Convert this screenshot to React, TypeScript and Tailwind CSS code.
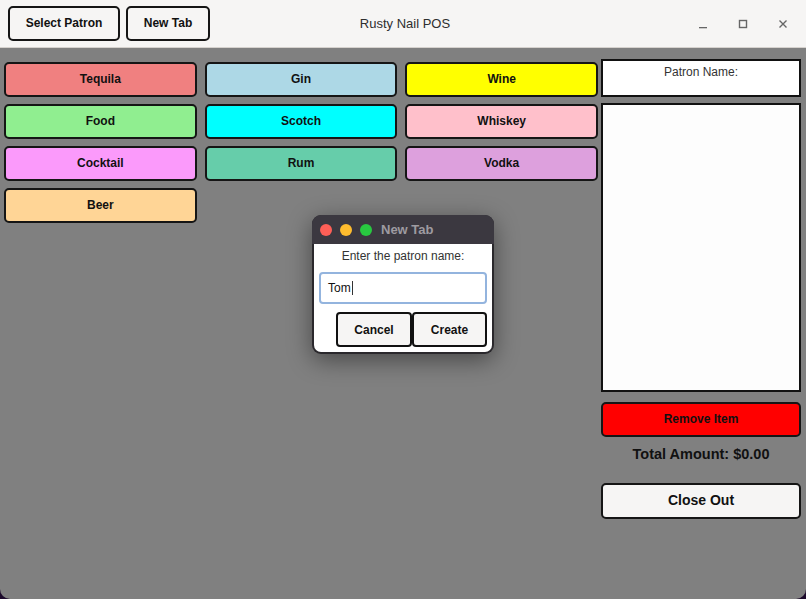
import React from "react"

const items = [
  { name: "Tequila", bg: "bg-[#f08080]" },
  { name: "Gin", bg: "bg-[#add8e6]" },
  { name: "Wine", bg: "bg-[#ffff00]" },
  { name: "Food", bg: "bg-[#90ee90]" },
  { name: "Scotch", bg: "bg-[#00ffff]" },
  { name: "Whiskey", bg: "bg-[#ffc0cb]" },
  { name: "Cocktail", bg: "bg-[#fb9afb]" },
  { name: "Rum", bg: "bg-[#66cdaa]" },
  { name: "Vodka", bg: "bg-[#dda0dd]" },
  { name: "Beer", bg: "bg-[#ffd596]" },
]

function TopButton({ label, w }: { label: string; w: string }) {
  return (
    <button className={`${w} h-[35px] rounded-[5px] border-2 border-[#151515] bg-[#f6f5f4] text-[12px] font-bold text-[#111] pb-[2px]`}>
      {label}
    </button>
  )
}

function NewTabDialog() {
  return (
    <div className="absolute left-[312px] top-[215px] w-[182px] h-[139px] rounded-[9px] bg-[#2a282c] shadow-[0_6px_24px_rgba(0,0,0,0.45)] flex flex-col overflow-hidden">
      {/* title bar */}
      <div className="h-[29px] bg-[#3b3840] flex items-center pl-[8px] gap-[8px] shrink-0">
        <span className="w-[12px] h-[12px] rounded-full bg-[#fe5f57]" />
        <span className="w-[12px] h-[12px] rounded-full bg-[#febc2e]" />
        <span className="w-[12px] h-[12px] rounded-full bg-[#28c840]" />
        <span className="ml-[1px] text-[13px] font-bold text-[#9e9ba1]">New Tab</span>
      </div>
      <div className="flex-1 mx-[2px] mb-[2px] rounded-b-[7px] bg-white flex flex-col px-[5px]">
        <div className="text-center text-[12px] text-[#333] mt-[4px] leading-[16px]">Enter the patron name:</div>
        <div className="mt-[8px] h-[32px] rounded-[4px] border-2 border-[#93b4de] flex items-center pl-[7px] text-[12px] text-[#111]">
          Tom<span className="w-px h-[14px] bg-[#333] ml-[1px]" />
        </div>
        <div className="mt-[8px] flex justify-end">
          <button className="w-[76px] h-[35px] rounded-[4px] border-2 border-[#111] bg-[#f6f5f4] text-[12px] font-bold text-[#111]">Cancel</button>
          <button className="w-[75px] h-[35px] rounded-[4px] border-2 border-[#111] bg-[#f6f5f4] text-[12px] font-bold text-[#111]">Create</button>
        </div>
      </div>
    </div>
  )
}

export default function App() {
  return (
    <div className="w-[806px] h-[599px] bg-[#1d0a2c] font-['Liberation_Sans',Arial,sans-serif] overflow-hidden">
      <div className="relative w-full h-full rounded-b-[10px] overflow-hidden bg-[#808080] flex flex-col">
        {/* header bar */}
        <div className="relative h-[48px] shrink-0 bg-[#f6f5f4] border-b border-[#d6d2ce] flex items-center gap-[6px] pl-[8px]">
          <TopButton label="Select Patron" w="w-[112px]" />
          <TopButton label="New Tab" w="w-[84px]" />
          <div className="absolute left-[4px] right-0 top-[14px] text-center text-[13px] text-[#2e2e2e] pointer-events-none">Rusty Nail POS</div>
          <div className="ml-auto mr-[17px] flex items-center gap-[28px]">
            <svg width="12" height="12" viewBox="0 0 12 12"><rect x="2" y="9" width="8" height="1.3" fill="#666" /></svg>
            <svg width="12" height="12" viewBox="0 0 12 12"><rect x="2.5" y="2.5" width="7" height="7" fill="none" stroke="#666" strokeWidth="1.4" /></svg>
            <svg width="12" height="12" viewBox="0 0 12 12"><path d="M2.5 2.5 L9.5 9.5 M9.5 2.5 L2.5 9.5" stroke="#666" strokeWidth="1.4" /></svg>
          </div>
        </div>

        {/* body */}
        <div className="flex flex-1 pl-[4px]">
          <div className="w-[594px] pt-[14px] grid grid-cols-3 gap-x-[8px] gap-y-[7px] content-start">
            {items.map((it) => (
              <button
                key={it.name}
                className={`h-[35px] rounded-[5px] border-2 border-[#151515] ${it.bg} text-[12px] font-bold text-[#111] pb-[1px]`}
              >
                {it.name}
              </button>
            ))}
          </div>

          <div className="ml-[3px] w-[200px] pt-[11px] flex flex-col">
            <div className="h-[38px] bg-white border-2 border-[#111] text-center text-[12px] text-[#333] pt-[2px]">Patron Name:</div>
            <div className="mt-[6px] h-[289px] bg-[#fdfdfd] border-2 border-[#111]" />
            <button className="mt-[10px] h-[35px] rounded-[5px] border-2 border-[#151515] bg-[#ff0000] text-[12px] font-bold text-[#111] pb-[1px]">Remove Item</button>
            <div className="mt-[8px] text-center text-[14.5px] font-bold text-[#111] leading-[18px]">Total Amount: $0.00</div>
            <button className="mt-[20px] h-[36px] rounded-[5px] border-2 border-[#151515] bg-[#f6f5f4] text-[14px] font-bold text-[#111] pb-[2px]">Close Out</button>
          </div>
        </div>

        <NewTabDialog />
      </div>
    </div>
  )
}
